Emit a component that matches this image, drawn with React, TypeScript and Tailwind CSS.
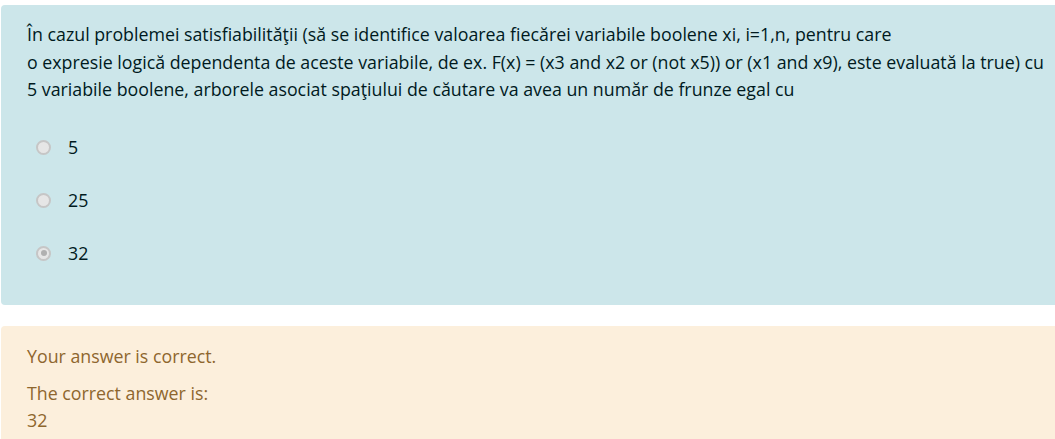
import React from 'react';

const options = ['5', '25', '32'];

const Radio: React.FC<{ checked?: boolean }> = ({ checked }) => (
  <span className="w-[15px] h-[15px] rounded-full border-2 border-[#c6c6c6] bg-[#e6e6e6] flex items-center justify-center shrink-0">
    {checked && <span className="w-[6px] h-[6px] rounded-full bg-[#b0b0b0]"></span>}
  </span>
);

const App: React.FC = () => {
  return (
    <div className="w-[1055px] h-[439px] overflow-hidden bg-white font-['Open_Sans',sans-serif] text-[17.8px]">
      <div className="w-[1060px] ml-px pt-[5px]">
        {/* Question */}
        <div className="bg-[#cce6ea] text-[#001a1e] rounded-[4px] h-[300px] pl-[26px] pt-[16px]">
          <p className="leading-[27.5px] whitespace-nowrap">
            În cazul problemei satisfiabilităţii (să se identifice valoarea fiecărei variabile boolene xi, i=1,n, pentru care
            <br />
            o expresie logică dependenta de aceste variabile, de ex. F(x) = (x3 and x2 or (not x5)) or (x1 and x9), este evaluată la true) cu
            <br />
            5 variabile boolene, arborele asociat spaţiului de căutare va avea un număr de frunze egal cu
          </p>
          <div className="mt-[32px] flex flex-col gap-[30px] pl-[9px]">
            {options.map((o, i) => (
              <label key={o} className="flex items-center gap-[17px] h-[23px]">
                <Radio checked={i === 2} />
                <span>{o}</span>
              </label>
            ))}
          </div>
        </div>

        {/* Feedback */}
        <div className="mt-[21px] bg-[#fcefdc] text-[#8e662e] rounded-[4px] h-[140px] pl-[26px] pt-[17px]">
          <p className="leading-[27.5px]">Your answer is correct.</p>
          <p className="mt-[9px] leading-[27.5px]">The correct answer is:</p>
          <p className="leading-[27.5px]">32</p>
        </div>
      </div>
    </div>
  );
};

export default App;
